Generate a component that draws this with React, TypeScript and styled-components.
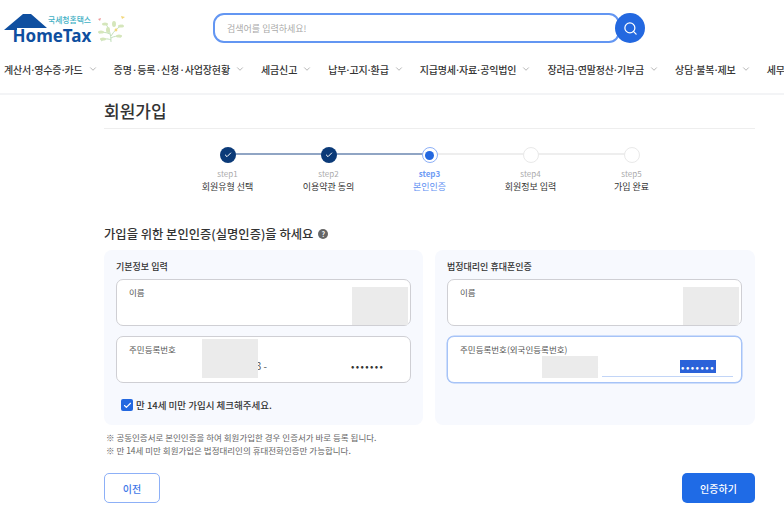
import React from "react";
import styled, { createGlobalStyle } from "styled-components";
import { Check, ChevronDown, Search } from "lucide-react";

const GlobalStyle = createGlobalStyle`
  html, body {
    margin: 0;
    background: #fff;
    overflow: hidden;
  }
  * {
    box-sizing: border-box;
  }
  body {
    font-family: "Noto Sans CJK KR", "Noto Sans", sans-serif;
    color: #222;
  }
`;

const menus = [
  { label: "계산서·영수증·카드" },
  { label: "증명·등록·신청·사업장현황", wideDots: true },
  { label: "세금신고" },
  { label: "납부·고지·환급" },
  { label: "지급명세·자료·공익법인" },
  { label: "장려금·연말정산·기부금" },
  { label: "상담·불복·제보" },
  { label: "세무" },
];

const steps = [
  { no: "step1", name: "회원유형 선택", state: "done" },
  { no: "step2", name: "이용약관 동의", state: "done" },
  { no: "step3", name: "본인인증", state: "current" },
  { no: "step4", name: "회원정보 입력", state: "todo" },
  { no: "step5", name: "가입 완료", state: "todo" },
];

const Logo = () => (
  <svg width="128" height="32" viewBox="0 0 128 32" aria-label="국세청홈택스 HomeTax">
    <path d="M0 16 L19 0 H27 L43 14 H13 V16 Z" fill="#0f4fa0" />
    <text x="44" y="9" fontSize="7.8" fontWeight="500" fill="#3fb0c4" fontFamily="Noto Sans CJK KR">
      국세청홈택스
    </text>
    <text x="8.5" y="27.5" fontSize="17" fontWeight="700" fill="#0f4fa0" fontFamily="Noto Sans">
      HomeTax
    </text>
    <g transform="translate(-3 0)">
      <g fill="none" stroke="#bcdcb4" strokeWidth="0.9">
        <path d="M110 28 C110 20 108 14 104 9" />
        <path d="M110 22 C113 17 117 13 122 11" />
        <path d="M109 20 C105 18 101 18 98 19" />
        <path d="M110 26 C106 24 103 25 100 27" />
        <path d="M110 24 C113 22 116 22 120 23" />
      </g>
      <g fill="#d5e6bb">
        <ellipse cx="104" cy="10" rx="3" ry="1.6" />
        <ellipse cx="113" cy="10" rx="2" ry="3" />
        <ellipse cx="120" cy="12" rx="3" ry="1.6" />
        <ellipse cx="100" cy="18" rx="3" ry="1.6" />
        <ellipse cx="107" cy="16" rx="2" ry="3" />
        <ellipse cx="118" cy="22" rx="3" ry="1.5" />
        <ellipse cx="102" cy="25" rx="3" ry="1.5" />
      </g>
      <circle cx="115" cy="16" r="1.4" fill="#f3d77a" />
      <path d="M97 5 l3 -1 l-1 3 Z" fill="#ee9a9a" />
      <path d="M120 2 l4 1 l-3 2 Z" fill="#f3d77a" />
    </g>
  </svg>
);

const App = () => {
  return (
    <Page>
      <GlobalStyle />
      <TopBar>
        <LogoBox>
          <Logo />
        </LogoBox>
        <SearchBox>
          <SearchInput placeholder="검색어를 입력하세요!" />
          <SearchButton aria-label="검색">
            <Search size={15} color="#fff" strokeWidth={2} />
          </SearchButton>
        </SearchBox>
      </TopBar>
      <Menu>
        {menus.map((m) => (
          <MenuItem key={m.label}>
            <span>
              {m.label.split("·").map((part, i) => (
                <React.Fragment key={part}>
                  {i > 0 && <MenuDot $wide={m.wideDots}>·</MenuDot>}
                  {part}
                </React.Fragment>
              ))}
            </span>
            <ChevronDown size={10} color="#777" strokeWidth={1.3} />
          </MenuItem>
        ))}
      </Menu>
      <Content>
        <Title>회원가입</Title>
        <Stepper>
          {steps.map((s) => (
            <Step key={s.no} $state={s.state}>
              <Dot $state={s.state}>
                {s.state === "done" && <Check size={8} color="#fff" strokeWidth={3} />}
                {s.state === "current" && <DotInner />}
              </Dot>
              <StepNo $state={s.state}>{s.no}</StepNo>
              <StepName $state={s.state}>{s.name}</StepName>
            </Step>
          ))}
        </Stepper>
        <Heading>
          가입을 위한 본인인증(실명인증)을 하세요
          <HelpIcon>?</HelpIcon>
        </Heading>
        <Panels>
          <Panel>
            <PanelTitle>기본정보 입력</PanelTitle>
            <Field>
              <FieldLabel>이름</FieldLabel>
              <Mask $left={235} $top={7} $height={38} />
            </Field>
            <Field>
              <FieldLabel>주민등록번호</FieldLabel>
              <ValueRow>
                <FrontValue>3 -</FrontValue>
                <BackValue>•••••••</BackValue>
              </ValueRow>
              <Mask $left={85} $top={2} $height={39} />
            </Field>
            <AgeCheck>
              <CheckBox>
                <Check size={9} color="#fff" strokeWidth={3} />
              </CheckBox>
              만 14세 미만 가입시 체크해주세요.
            </AgeCheck>
          </Panel>
          <Panel>
            <PanelTitle>법정대리인 휴대폰인증</PanelTitle>
            <Field>
              <FieldLabel>이름</FieldLabel>
              <Mask $left={235} $top={7} $height={38} />
            </Field>
            <Field $focused>
              <FieldLabel>주민등록번호(외국인등록번호)</FieldLabel>
              <ValueRow>
                <FrontValue>-</FrontValue>
                <BackInput>
                  <Selected>•••••••</Selected>
                </BackInput>
              </ValueRow>
              <Mask $left={94} $top={19} $height={22} />
            </Field>
          </Panel>
        </Panels>
        <Notes>
          <li>※ 공동인증서로 본인인증을 하여 회원가입한 경우 인증서가 바로 등록 됩니다.</li>
          <li>※ 만 14세 미만 회원가입은 법정대리인의 휴대전화인증만 가능합니다.</li>
        </Notes>
        <Actions>
          <PrevButton>이전</PrevButton>
          <NextButton>인증하기</NextButton>
        </Actions>
      </Content>
    </Page>
  );
};

const Page = styled.div`
  width: 784px;
  height: 520px;
  overflow: hidden;
`;

const TopBar = styled.header`
  height: 56px;
  display: flex;
  align-items: flex-start;
  padding: 13px 0 0 4px;
`;

const LogoBox = styled.div`
  width: 209px;
  padding-top: 1px;
  svg {
    display: block;
  }
`;

const SearchBox = styled.div`
  display: flex;
  align-items: center;
`;

const SearchInput = styled.input`
  width: 407px;
  height: 30px;
  border: 2px solid #6396f2;
  border-radius: 11px;
  padding: 0 12px;
  font: 400 9px "Noto Sans CJK KR", sans-serif;
  outline: none;
  &::placeholder {
    color: #aaa;
  }
`;

const SearchButton = styled.button`
  width: 30px;
  height: 30px;
  margin-left: -5px;
  border: 0;
  border-radius: 50%;
  padding: 0;
  background: #2368e0;
  display: flex;
  align-items: center;
  justify-content: center;
  position: relative;
`;

const Menu = styled.nav`
  height: 39px;
  padding: 0 0 11px 4px;
  display: flex;
  align-items: center;
  gap: 16px;
  white-space: nowrap;
  border-bottom: 2px solid #f3f4f6;
`;

const MenuItem = styled.a`
  display: flex;
  align-items: center;
  gap: 5px;
  flex: none;
  font-size: 10px;
  font-weight: 500;
  color: #333;
  letter-spacing: -0.15px;
`;

const MenuDot = styled.span<{ $wide?: boolean }>`
  margin: 0 ${(p) => (p.$wide ? "0" : "-1.25px")};
`;

const Content = styled.main`
  width: 651px;
  margin-left: 104px;
`;

const Title = styled.h1`
  margin: 0;
  height: 34px;
  font-size: 17px;
  font-weight: 500;
  line-height: 31px;
  color: #333;
  border-bottom: 1px solid #eeeeee;
`;

const Stepper = styled.ol`
  list-style: none;
  margin: 18px 0 0;
  padding: 0;
  display: grid;
  grid-template-columns: repeat(5, 101px);
  justify-content: center;
`;

const Step = styled.li<{ $state: string }>`
  position: relative;
  display: flex;
  flex-direction: column;
  align-items: center;
  &:not(:last-child)::after {
    content: "";
    position: absolute;
    top: 6px;
    left: 50%;
    width: 100%;
    height: 2px;
    background: ${(p) => (p.$state === "done" ? "#90a5c4" : "#eeeeee")};
  }
`;

const Dot = styled.span<{ $state: string }>`
  position: relative;
  z-index: 1;
  width: 16px;
  height: 16px;
  border-radius: 50%;
  display: flex;
  align-items: center;
  justify-content: center;
  background: ${(p) => (p.$state === "done" ? "#0b3a78" : "#fff")};
  border: ${(p) =>
    p.$state === "current" ? "1.5px solid #8db0f7" : p.$state === "todo" ? "1.5px solid #e9e9e9" : "0"};
`;

const DotInner = styled.span`
  width: 9px;
  height: 9px;
  border-radius: 50%;
  background: #2368e0;
`;

const StepNo = styled.span<{ $state: string }>`
  margin-top: 4px;
  font-size: 8px;
  line-height: 13px;
  font-weight: ${(p) => (p.$state === "current" ? 700 : 400)};
  color: ${(p) => (p.$state === "current" ? "#6f9cf5" : "#aaaaaa")};
`;

const StepName = styled.span<{ $state: string }>`
  font-size: 9px;
  line-height: 13px;
  color: ${(p) => (p.$state === "current" ? "#5c8ef2" : "#333")};
`;

const Heading = styled.h2`
  margin: 31px 0 0;
  height: 20px;
  display: flex;
  align-items: center;
  gap: 5px;
  font-size: 12.3px;
  font-weight: 500;
  color: #333;
`;

const HelpIcon = styled.span`
  width: 10px;
  height: 10px;
  border-radius: 50%;
  background: #666;
  color: #fff;
  font-size: 7px;
  font-weight: 700;
  line-height: 10px;
  text-align: center;
`;

const Panels = styled.div`
  margin-top: 6px;
  display: grid;
  grid-template-columns: 319px 320px;
  justify-content: space-between;
`;

const Panel = styled.section`
  height: 175px;
  padding: 11px 0 0 12px;
  background: #f7f9fe;
  border-radius: 8px;
`;

const PanelTitle = styled.h3`
  margin: 0 0 6px;
  height: 12px;
  font-size: 9px;
  line-height: 12px;
  font-weight: 500;
  color: #333;
`;

const Field = styled.div<{ $focused?: boolean }>`
  position: relative;
  width: 295px;
  height: 47px;
  margin-bottom: 10px;
  padding: 5px 12px 0;
  background: #fff;
  border: 1px solid ${(p) => (p.$focused ? "#a6c3f7" : "#cfcfd4")};
  box-shadow: ${(p) => (p.$focused ? "0 0 0 0.5px #a6c3f7" : "none")};
  border-radius: 7px;
`;

const FieldLabel = styled.div`
  font-size: 8.5px;
  line-height: 14px;
  color: #555;
`;

const ValueRow = styled.div`
  margin-top: 3px;
  display: flex;
  align-items: flex-end;
  height: 14px;
`;

const FrontValue = styled.span`
  flex: none;
  width: 138px;
  text-align: right;
  font-size: 10px;
  line-height: 14px;
  color: #555;
`;

const BackValue = styled.span`
  margin-left: 84px;
  font-size: 10px;
  line-height: 14px;
  letter-spacing: 1.35px;
  color: #333;
`;

const BackInput = styled.div`
  flex: none;
  width: 131px;
  height: 18px;
  margin: 0 0 -4px 4px;
  padding: 0 17px 3px 0;
  display: flex;
  justify-content: flex-end;
  align-items: flex-end;
  border-bottom: 1px solid #c2d5f7;
`;

const Selected = styled.span`
  height: 13px;
  font-size: 10px;
  line-height: 13px;
  letter-spacing: 1.45px;
  padding: 0 1px;
  color: #fff;
  background: #2b62d9;
`;

const Mask = styled.div<{ $left: number; $top: number; $height: number }>`
  position: absolute;
  left: ${(p) => p.$left}px;
  top: ${(p) => p.$top}px;
  width: 56px;
  height: ${(p) => p.$height}px;
  background: #ebebeb;
`;

const AgeCheck = styled.label`
  display: flex;
  align-items: center;
  gap: 3px;
  margin: 15px 0 0 5px;
  font-size: 9.5px;
  font-weight: 500;
  color: #333;
`;

const CheckBox = styled.span`
  width: 12px;
  height: 12px;
  border-radius: 2px;
  background: #2368e0;
  display: flex;
  align-items: center;
  justify-content: center;
`;

const Notes = styled.ul`
  list-style: none;
  margin: 6px 0 0 2px;
  padding: 0;
  li {
    font-size: 8.5px;
    line-height: 13px;
    color: #666;
  }
`;

const Actions = styled.div`
  margin-top: 16px;
  display: flex;
  justify-content: space-between;
`;

const PrevButton = styled.button`
  width: 56px;
  height: 30px;
  border: 1.5px solid #8db0f7;
  border-radius: 5px;
  background: #fff;
  color: #3f78e8;
  font: 500 10px "Noto Sans CJK KR", sans-serif;
`;

const NextButton = styled.button`
  width: 73px;
  height: 30px;
  border: 0;
  border-radius: 5px;
  background: #1f6be6;
  color: #fff;
  font: 500 10px "Noto Sans CJK KR", sans-serif;
`;

export default App;
